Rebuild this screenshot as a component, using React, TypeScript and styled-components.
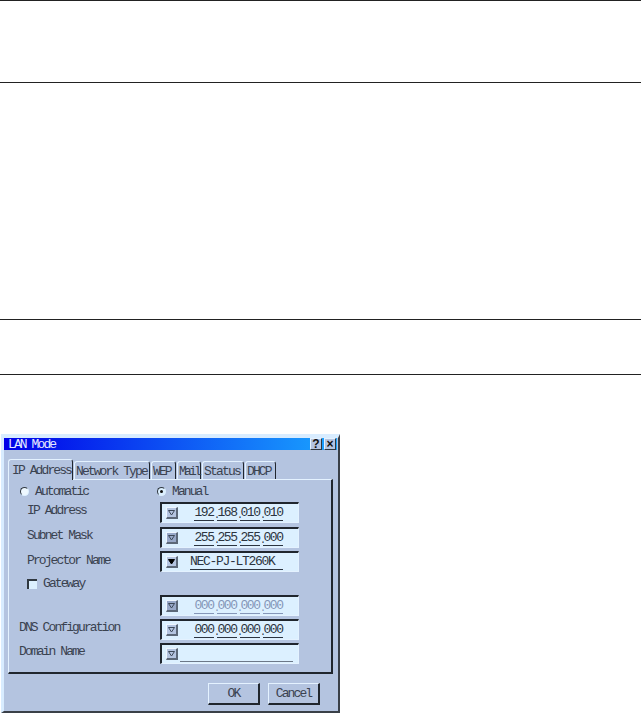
import React from 'react';
import styled, { createGlobalStyle } from 'styled-components';

const GlobalStyle = createGlobalStyle`
  html, body {
    margin: 0;
    padding: 0;
    background: #ffffff;
  }
  body {
    font-family: "Liberation Mono", "Courier New", monospace;
    overflow: hidden;
  }
`;

const Page = styled.div`
  width: 641px;
  height: 713px;
  overflow: hidden;
`;

const Rule = styled.hr<{ $gap: number }>`
  border: 0;
  height: 1px;
  margin: 0 0 ${p => p.$gap}px;
  background: #222222;
`;

const Dialog = styled.div`
  box-sizing: border-box;
  width: 339px;
  height: 279px;
  margin: 59px 0 0 1px;
  padding: 0 1px 0 0;
  display: flex;
  flex-direction: column;
  background: #b4c4e0;
  border-top: 4px solid #d8ecff;
  border-left: 3px solid #d8ecff;
  border-right: 2px solid #3a4048;
  border-bottom: 2px solid #3a4048;
`;

const TitleBar = styled.div`
  height: 12px;
  flex: none;
  display: flex;
  align-items: center;
  justify-content: space-between;
  padding: 0 1px 0 4px;
  background: linear-gradient(to right, #0000e8, #1aa4ff);
`;

const TitleText = styled.span`
  color: #e4e8ff;
  font-size: 13px;
  letter-spacing: -1.9px;
`;

const TitleButtons = styled.div`
  display: flex;
  gap: 2px;
`;

const TitleButton = styled.button`
  box-sizing: border-box;
  width: 12px;
  height: 12px;
  padding: 0;
  display: flex;
  align-items: center;
  justify-content: center;
  background: #b4c4e0;
  color: #111111;
  font: bold 12px "Liberation Sans", sans-serif;
  border-style: solid;
  border-width: 1px;
  border-color: #e4f2ff #303840 #303840 #e4f2ff;
`;

const TabRow = styled.div`
  height: 20px;
  flex: none;
  margin: 9px 0 0 4px;
  display: flex;
  align-items: flex-end;
  gap: 1px;
`;

const Tab = styled.div<{ $width: number; $active?: boolean; $spacing: number }>`
  box-sizing: border-box;
  width: ${p => p.$width}px;
  height: ${p => (p.$active ? 21 : 18)}px;
  margin-bottom: ${p => (p.$active ? -1 : 0)}px;
  padding: 1px 0 0 ${p => (p.$active ? 3 : 1)}px;
  position: relative;
  z-index: ${p => (p.$active ? 2 : 1)};
  display: flex;
  align-items: center;
  font-size: 13px;
  letter-spacing: ${p => p.$spacing}px;
  color: #3a4250;
  white-space: nowrap;
  background: #b4c4e0;
  border-top: 1px solid #e4f2ff;
  border-left: 1px solid #e4f2ff;
  border-right: 1px solid #20262e;
  border-top-left-radius: 3px;
  border-top-right-radius: 3px;
`;

const Panel = styled.div`
  box-sizing: border-box;
  width: 325px;
  height: 195px;
  flex: none;
  margin-left: 4px;
  padding-top: 2px;
  border-top: 1px solid #e4f2ff;
  border-left: 1px solid #e4f2ff;
  border-right: 2px solid #20262e;
  border-bottom: 2px solid #20262e;
`;

const Row = styled.div<{ $height: number }>`
  height: ${p => p.$height}px;
  display: grid;
  grid-template-columns: 151px 139px;
  align-items: start;
`;

const OptionRow = styled.div`
  box-sizing: border-box;
  height: 20px;
  display: grid;
  grid-template-columns: 137px 1fr;
  align-items: center;
  padding: 0 0 2px 11px;
`;

const Label = styled.span<{ $indent?: number; $top?: number }>`
  padding: ${p => p.$top ?? 0}px 0 0 ${p => p.$indent ?? 18}px;
  font-size: 13px;
  line-height: 16px;
  letter-spacing: -1.9px;
  color: #3a4250;
  white-space: nowrap;
`;

const Option = styled.label`
  display: flex;
  align-items: center;
  gap: 6px;
  font-size: 13px;
  letter-spacing: -1.9px;
  color: #3a4250;
`;

const Radio = styled.span<{ $on?: boolean }>`
  box-sizing: border-box;
  width: 9px;
  height: 9px;
  border-radius: 50%;
  display: flex;
  align-items: center;
  justify-content: center;
  background: ${p => (p.$on ? '#dcf0ff' : '#eef8ff')};
  border: 1px solid #303840;
  border-right-color: #dcf0ff;
  border-bottom-color: #dcf0ff;

  &::after {
    content: "";
    width: 3px;
    height: 3px;
    border-radius: 50%;
    background: ${p => (p.$on ? '#111111' : 'transparent')};
  }
`;

const Check = styled.span`
  box-sizing: border-box;
  width: 10px;
  height: 10px;
  background: #dcf0ff;
  border-top: 2px solid #303840;
  border-left: 2px solid #303840;
`;

const Field = styled.div<{ $disabled?: boolean }>`
  box-sizing: border-box;
  width: 139px;
  height: 21px;
  display: flex;
  align-items: center;
  padding-left: 4px;
  background: #dcf0ff;
  color: ${p => (p.$disabled ? '#8596b8' : '#2c3440')};
  border-top: 2px solid #20262e;
  border-left: 2px solid #20262e;
  border-right: 1px solid #e4f2ff;
  border-bottom: 1px solid #e4f2ff;
`;

const DropButton = styled.span<{ $tone: 'plain' | 'grey' | 'dark' }>`
  box-sizing: border-box;
  width: 12px;
  height: 12px;
  flex: none;
  display: flex;
  align-items: center;
  justify-content: center;
  background: ${p => (p.$tone === 'grey' ? '#98a8c8' : '#b4c4e0')};
  color: ${p => (p.$tone === 'dark' ? '#000000' : '#3c4858')};
  border-right: 2px solid #5c6878;
  border-bottom: 2px solid #5c6878;
  border-top: 1px solid #eef6ff;
  border-left: 1px solid #eef6ff;
`;

const Segments = styled.div`
  margin-left: 16px;
  display: flex;
  align-items: flex-end;
`;

const Segment = styled.span`
  width: 20px;
  text-align: center;
  font-size: 13px;
  line-height: 14px;
  letter-spacing: -1.4px;
  border-bottom: 1px solid currentColor;
`;

const Dot = styled.span`
  width: 3px;
  font-size: 10px;
  line-height: 10px;
  letter-spacing: -3px;
  text-align: left;
`;

const TextValue = styled.span`
  box-sizing: border-box;
  width: 93px;
  margin-left: 12px;
  font-size: 13px;
  line-height: 14px;
  letter-spacing: -1.3px;
  white-space: nowrap;
  border-bottom: 1px solid currentColor;
`;

const EmptyValue = styled.span`
  width: 113px;
  height: 14px;
  margin-left: 2px;
  border-bottom: 1px solid #6c7888;
`;

const ButtonRow = styled.div`
  flex: 1;
  display: flex;
  justify-content: flex-end;
  align-items: flex-start;
  gap: 8px;
  padding: 9px 17px 0 0;
`;

const ActionButton = styled.button`
  box-sizing: border-box;
  width: 52px;
  height: 22px;
  padding: 0;
  background: #b4c4e0;
  color: #3a4250;
  font: 13px "Liberation Mono", monospace;
  letter-spacing: -1.9px;
  border-style: solid;
  border-width: 1px 2px 2px 1px;
  border-color: #e4f2ff #20262e #20262e #e4f2ff;
`;

const Triangle = ({ filled }: { filled?: boolean }) => (
  <svg width="7" height="6" viewBox="0 0 7 6">
    <path d="M0.5 0.5H6.5L3.5 5Z" fill={filled ? 'currentColor' : 'none'} stroke="currentColor" strokeWidth="1" />
  </svg>
);

const Address = ({ parts }: { parts: string[] }) => (
  <Segments>
    {parts.map((part, i) => (
      <React.Fragment key={i}>
        {i > 0 && <Dot>.</Dot>}
        <Segment>{part}</Segment>
      </React.Fragment>
    ))}
  </Segments>
);

const tabs = [
  { name: 'IP Address', width: 65, spacing: -1.9, active: true },
  { name: 'Network Type', width: 76, spacing: -1.9 },
  { name: 'WEP', width: 25, spacing: -1.9 },
  { name: 'Mail', width: 24, spacing: -2.8 },
  { name: 'Status', width: 42, spacing: -1.8 },
  { name: 'DHCP', width: 31, spacing: -1.9 },
];

export default function App() {
  return (
    <Page>
      <GlobalStyle />
      <Rule $gap={81} />
      <Rule $gap={236} />
      <Rule $gap={54} />
      <Rule $gap={0} />
      <Dialog>
        <TitleBar>
          <TitleText>LAN Mode</TitleText>
          <TitleButtons>
            <TitleButton>?</TitleButton>
            <TitleButton>×</TitleButton>
          </TitleButtons>
        </TitleBar>
        <TabRow>
          {tabs.map(tab => (
            <Tab key={tab.name} $width={tab.width} $spacing={tab.spacing} $active={tab.active}>{tab.name}</Tab>
          ))}
        </TabRow>
        <Panel>
          <OptionRow>
            <Option><Radio />Automatic</Option>
            <Option><Radio $on />Manual</Option>
          </OptionRow>
          <Row $height={25}>
            <Label $top={1}>IP Address</Label>
            <Field>
              <DropButton $tone="plain"><Triangle /></DropButton>
              <Address parts={['192', '168', '010', '010']} />
            </Field>
          </Row>
          <Row $height={24}>
            <Label $top={1}>Subnet Mask</Label>
            <Field>
              <DropButton $tone="grey"><Triangle /></DropButton>
              <Address parts={['255', '255', '255', '000']} />
            </Field>
          </Row>
          <Row $height={24}>
            <Label $top={2}>Projector Name</Label>
            <Field>
              <DropButton $tone="dark"><Triangle filled /></DropButton>
              <TextValue>NEC-PJ-LT260K</TextValue>
            </Field>
          </Row>
          <Row $height={20}>
            <Label $top={1}>
              <Option><Check />Gateway</Option>
            </Label>
          </Row>
          <Row $height={24}>
            <span />
            <Field $disabled>
              <DropButton $tone="grey"><Triangle /></DropButton>
              <Address parts={['000', '000', '000', '000']} />
            </Field>
          </Row>
          <Row $height={24}>
            <Label $indent={10} $top={1}>DNS Configuration</Label>
            <Field>
              <DropButton $tone="plain"><Triangle /></DropButton>
              <Address parts={['000', '000', '000', '000']} />
            </Field>
          </Row>
          <Row $height={24}>
            <Label $indent={10} $top={1}>Domain Name</Label>
            <Field>
              <DropButton $tone="plain"><Triangle /></DropButton>
              <EmptyValue />
            </Field>
          </Row>
        </Panel>
        <ButtonRow>
          <ActionButton>OK</ActionButton>
          <ActionButton>Cancel</ActionButton>
        </ButtonRow>
      </Dialog>
    </Page>
  );
}
